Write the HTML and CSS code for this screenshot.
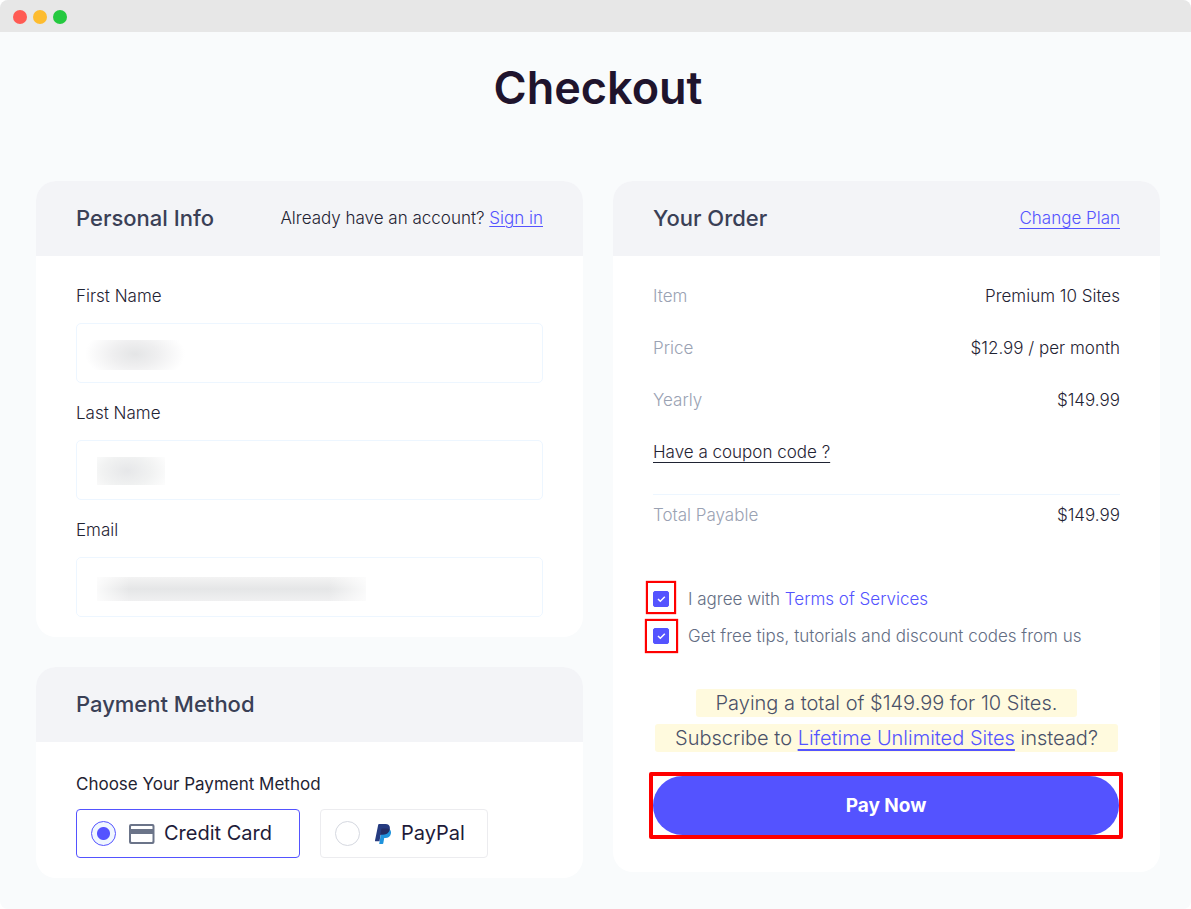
FILE: index.html
```html
<!DOCTYPE html>
<html lang="en">
<head>
<meta charset="utf-8">
<meta name="viewport" content="width=device-width, initial-scale=1">
<title>Checkout</title>
<link rel="stylesheet" href="styles.css">
</head>
<body>
<div class="window">
  <div class="titlebar">
    <span class="dot dot-close"></span>
    <span class="dot dot-minimize"></span>
    <span class="dot dot-zoom"></span>
  </div>
  <main class="page">
    <h1 class="page-title">Checkout</h1>
    <form class="columns">
      <div class="column">
        <section class="card">
          <header class="card-header">
            <h2 class="card-title">Personal Info</h2>
            <p class="header-note">Already have an account? <a class="link" href="#">Sign in</a></p>
          </header>
          <div class="card-body fields">
            <div class="field">
              <label for="first-name">First Name</label>
              <input class="text-input masked-first" id="first-name" type="text">
            </div>
            <div class="field">
              <label for="last-name">Last Name</label>
              <input class="text-input masked-last" id="last-name" type="text">
            </div>
            <div class="field">
              <label for="email">Email</label>
              <input class="text-input masked-email" id="email" type="email">
            </div>
          </div>
        </section>
        <section class="card">
          <header class="card-header">
            <h2 class="card-title">Payment Method</h2>
          </header>
          <fieldset class="card-body payment">
            <legend class="payment-legend">Choose Your Payment Method</legend>
            <div class="payment-options">
              <label class="payment-option option-card">
                <input class="radio" type="radio" name="method" checked>
                <svg class="card-icon" viewBox="0 0 26 20" aria-hidden="true"><path fill="#6b7489" fill-rule="evenodd" d="M2 0h21.500a2 2 0 0 1 2 2v16a2 2 0 0 1-2 2H2a2 2 0 0 1-2-2V2A2 2 0 0 1 2 0zM2.500 2a.5.5 0 0 0-.5.500v2.500h21.500V2.500a.5.5 0 0 0-.5-.5zM2 10v7.200a.8.8 0 0 0 .8.800h19.900a.8.8 0 0 0 .8-.8V10z"/></svg>
                <span>Credit Card</span>
              </label>
              <label class="payment-option option-paypal">
                <input class="radio" type="radio" name="method">
                <svg class="paypal-icon" viewBox="0 0 16 20" aria-hidden="true"><path fill="#1f93dc" d="M14.200 5.200c1.700 1 2.100 2.800 1.600 4.700-.6 2.700-2.600 4.100-5.500 4.100H9.200l-.9 5.300c-.1.400-.4.700-.8.700H4.200L6 9z"/><path fill="#253b80" d="M3.200.7C3.300.3 3.600 0 4 0h6.500c3.200 0 4.900 1.900 4.300 5.100-.6 3.600-3 5.300-6.600 5.300H6.300c-.4 0-.7.300-.8.700l-1 6.100H.5a.5.5 0 0 1-.5-.6z"/><path fill="#222d65" d="M6.300 5.200c.1-.4.300-.6.700-.6h5.100c1 0 1.900.2 2.600.6-.6 3.500-3 5.200-6.500 5.200H6.300c-.4 0-.7.300-.8.700z"/></svg>
                <span>PayPal</span>
              </label>
            </div>
          </fieldset>
        </section>
      </div>
      <section class="card">
        <header class="card-header">
          <h2 class="card-title">Your Order</h2>
          <a class="link link-low" href="#">Change Plan</a>
        </header>
        <div class="card-body order">
          <dl class="rows">
            <div class="row"><dt>Item</dt><dd>Premium 10 Sites</dd></div>
            <div class="row"><dt>Price</dt><dd>$12.99 / per month</dd></div>
            <div class="row"><dt>Yearly</dt><dd>$149.99</dd></div>
          </dl>
          <a class="coupon" href="#">Have a coupon code ?</a>
          <dl class="total">
            <div class="row"><dt>Total Payable</dt><dd>$149.99</dd></div>
          </dl>
          <div class="consents">
            <div class="consent">
              <span class="tick tick-terms">
                <input class="checkbox" id="terms" type="checkbox" checked>
                <svg class="tick-mark" viewBox="0 0 16 16" aria-hidden="true"><path d="M5 8l2.300 2.300 4.500-4.500" fill="none" stroke="#fff" stroke-width="1.500"/></svg>
              </span>
              <label for="terms">I agree with <a class="link-plain" href="#">Terms of Services</a></label>
            </div>
            <div class="consent">
              <span class="tick tick-tips">
                <input class="checkbox" id="tips" type="checkbox" checked>
                <svg class="tick-mark" viewBox="0 0 16 16" aria-hidden="true"><path d="M5 8l2.300 2.300 4.500-4.500" fill="none" stroke="#fff" stroke-width="1.500"/></svg>
              </span>
              <label for="tips">Get free tips, tutorials and discount codes from us</label>
            </div>
          </div>
          <div class="summary">
            <p class="notice">Paying a total of $149.99 for 10 Sites.</p>
            <p class="notice">Subscribe to <a class="link link-thick" href="#">Lifetime Unlimited Sites</a> instead?</p>
          </div>
          <div class="pay">
            <button class="pay-button" type="submit">Pay Now</button>
          </div>
        </div>
      </section>
    </form>
  </main>
</div>
</body>
</html>
```
FILE: styles.css
```css
* {
  box-sizing: border-box;
}

body {
  margin: 0;
  background: #fff;
  color: #1f2333;
  font: 300 17px/27px Inter, "DejaVu Sans", sans-serif;
}

h1, h2, p, dl, dd, fieldset {
  margin: 0;
}

.window {
  min-height: 100vh;
  overflow: hidden;
  border-radius: 8px;
  background: #f9fbfc;
}

.titlebar {
  display: flex;
  align-items: center;
  gap: 6px;
  height: 32px;
  padding: 2px 13px 0;
  background: #e7e7e7;
}

.dot {
  width: 14px;
  height: 14px;
  border-radius: 50%;
}

.dot-close { background: #ff5b54; }
.dot-minimize { background: #fdbc2f; }
.dot-zoom { background: #24c93f; }

.page {
  padding: 24px 31px 30px 36px;
}

.page-title {
  margin-bottom: 61px;
  color: #1f142d;
  font-size: 45px;
  font-weight: 600;
  line-height: 64px;
  text-align: center;
}

.columns {
  display: grid;
  grid-template-columns: repeat(2, minmax(0, 1fr));
  align-items: start;
  gap: 30px;
}

.column {
  display: grid;
  gap: 30px;
}

.card {
  overflow: hidden;
  border-radius: 20px;
  background: #fff;
}

.card-header {
  display: flex;
  align-items: center;
  justify-content: space-between;
  min-height: 75px;
  padding: 0 40px;
  background: #f3f4f7;
}

.card-title {
  color: #3a4056;
  font-size: 22px;
  font-weight: 500;
}

.card-body {
  padding: 27px 40px 20px;
}

.link {
  color: #5453ff;
  text-decoration: underline;
  text-decoration-thickness: 1px;
  text-underline-offset: 2px;
}

.link-low { text-underline-offset: 4px; }

.link-thick {
  text-decoration-thickness: 2px;
  text-underline-offset: 4px;
}

.link-plain {
  color: #5453ff;
  text-decoration: none;
}

.fields {
  display: grid;
  gap: 17px;
}

.field {
  display: grid;
  gap: 13px;
}

.text-input {
  width: 100%;
  height: 60px;
  padding: 0 20px;
  border: 1px solid #edf6ff;
  border-radius: 5px;
  background: #fff no-repeat;
  font: inherit;
}

/* Obscured values are drawn as soft grey patches */
.masked-first {
  background-image: radial-gradient(50px 28px at 50px 14px, #e4e5e6, #efeff0 45%, #fff);
  background-position: 8px 16px;
  background-size: 100px 30px;
}

.masked-last {
  background-image: radial-gradient(44px 28px at 30px 14px, #e6e7e9, #f1f2f2 55%, #fdfdfd);
  background-position: 20px 16px;
  background-size: 68px 28px;
}

.masked-email {
  background-image:
    linear-gradient(90deg, #fffc, #fff0 12%, #fff0 86%, #fffc),
    linear-gradient(#f3f3f3, #e5e6e7 50%, #f0f0f1);
  background-position: 20px 19px;
  background-size: 269px 24px;
}

.payment {
  min-width: 0;
  padding-top: 29px;
  border: 0;
}

.payment-legend {
  float: left;
  width: 100%;
  margin: 0 0 11px;
  padding: 0;
  font-weight: 400;
}

.payment-options {
  display: flex;
  flex-wrap: wrap;
  gap: 20px;
  clear: both;
}

.payment-option {
  display: flex;
  align-items: center;
  height: 49px;
  padding-left: 14px;
  border: 1px solid #ececef;
  border-radius: 4px;
  color: #1e1b39;
  font-size: 20px;
  font-weight: 400;
}

.option-card {
  padding-right: 27px;
  border-color: #5453ff;
}

.option-paypal { padding-right: 22px; }

.radio {
  width: 25px;
  height: 25px;
  margin: 0;
  appearance: none;
  border: 1px solid #d5d8e0;
  border-radius: 50%;
  background: #fff;
}

.radio:checked {
  border-color: #5453ff;
  background: radial-gradient(circle, #5453ff 6px, #f0f7ff 7px);
}

.card-icon {
  width: 26px;
  height: 20px;
  margin: 0 9px 0 13px;
}

.paypal-icon {
  width: 16px;
  height: 20px;
  margin: 0 10px 0 15px;
}

.order { padding-bottom: 33px; }

.rows {
  display: grid;
  gap: 25px;
  margin-bottom: 25px;
}

.row {
  display: flex;
  justify-content: space-between;
}

.row dt { color: #9aa2b3; }

.coupon {
  color: #1f2333;
  text-decoration: underline;
  text-decoration-thickness: 1px;
  text-underline-offset: 4px;
}

.total {
  margin-top: 28px;
  padding-top: 7px;
  border-top: 1px solid #edf6ff;
}

.consents {
  display: grid;
  gap: 10px;
  margin: 57px 0 39px;
  color: #646e84;
}

.consent {
  display: flex;
  align-items: flex-start;
  gap: 19px;
}

.tick {
  position: relative;
  display: grid;
  flex: none;
  width: 16px;
  height: 16px;
  margin-top: 5px;
}

.checkbox,
.tick-mark {
  grid-area: 1 / 1;
  width: 16px;
  height: 16px;
  margin: 0;
}

.checkbox {
  appearance: none;
  border: 1px solid #5453ff;
  border-radius: 2px;
}

.checkbox:checked { background: #5453ff; }

.tick-mark { pointer-events: none; }

/* Red callout frames around the ticks */
.tick::after {
  position: absolute;
  border: 2px solid #f00;
  box-shadow: 0 0 1px #f00;
  content: "";
}

.tick-terms::after { inset: -10px -7px -7px; }
.tick-tips::after { inset: -9px -9px -9px -8px; }

.summary {
  display: flex;
  flex-direction: column;
  align-items: center;
  gap: 7px;
}

.notice {
  padding: 0 20px;
  border-radius: 3px;
  background: #fffade;
  color: #4a5168;
  font-size: 20px;
  line-height: 28px;
  white-space: nowrap;
}

.pay {
  margin: 20px -3px 0 -4px;
  border: 4px solid #f00;
  border-radius: 2px;
}

.pay-button {
  display: block;
  width: 100%;
  height: 59px;
  border: 0;
  border-radius: 30px;
  background: #5453ff;
  color: #fff;
  font: 700 19px/27px Inter, "DejaVu Sans", sans-serif;
}

@media (max-width: 900px) {
  .columns { grid-template-columns: minmax(0, 1fr); }
  .card-header { flex-wrap: wrap; }
  .notice { white-space: normal; }
}
```
